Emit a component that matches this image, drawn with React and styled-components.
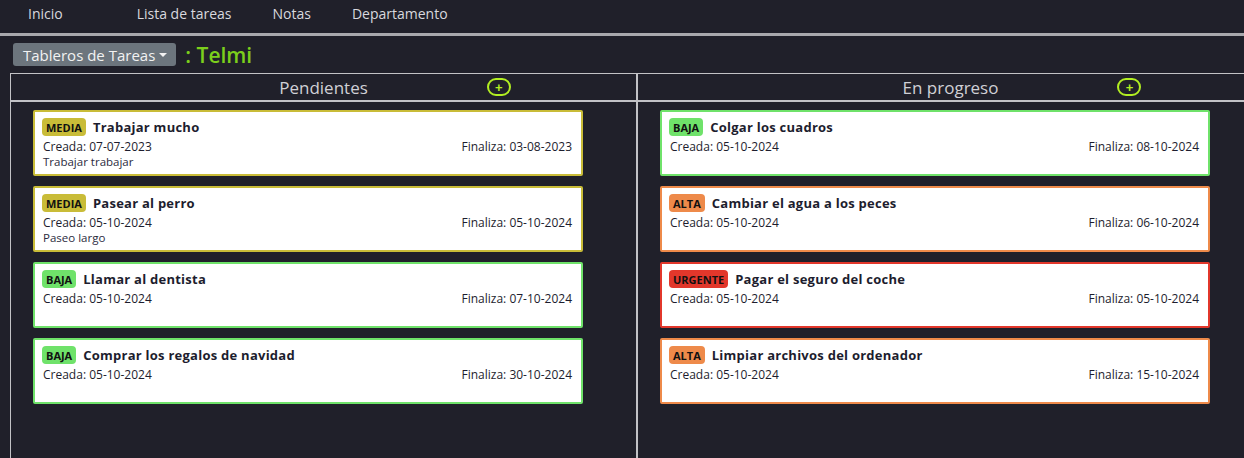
import React from "react"
import styled, { createGlobalStyle } from "styled-components"

const GlobalStyle = createGlobalStyle`
  html, body {
    margin: 0;
    padding: 0;
    background: #20202a;
    font-family: "Open Sans", "Noto Sans", sans-serif;
    overflow: hidden;
  }
`

const PRIORITY = {
  MEDIA: "#c9bc38",
  BAJA: "#6fe26a",
  ALTA: "#ee8a4a",
  URGENTE: "#e2372b",
}

const Page = styled.div`
  min-height: 458px;
  display: flex;
  flex-direction: column;
`

const Nav = styled.nav`
  height: 36px;
  box-sizing: border-box;
  display: flex;
  align-items: center;
  padding: 0 0 6px 28px;
  border-bottom: 3px solid #a8a8ad;
`

const NavLink = styled.a`
  color: #d8d8de;
  font-size: 14px;
  font-weight: 500;
  margin-right: ${(props) => props.$gap}px;
  text-decoration: none;
`

const Toolbar = styled.div`
  display: flex;
  align-items: center;
  gap: 9px;
  padding: 6px 13px 0;
  height: 31px;
  box-sizing: border-box;
`

const Dropdown = styled.button`
  height: 23px;
  padding: 0 9px 0 10px;
  background: #6c757d;
  border: none;
  border-radius: 3px;
  color: #f2f2f2;
  font-family: inherit;
  font-size: 15px;
  font-weight: 500;
  display: flex;
  align-items: center;
  gap: 4px;

  &::after {
    content: "";
    border-left: 4px solid transparent;
    border-right: 4px solid transparent;
    border-top: 4px solid #f2f2f2;
    margin-top: 1px;
  }
`

const Owner = styled.span`
  color: #7ccf1c;
  font-size: 21px;
  font-weight: 600;
`

const Board = styled.div`
  margin: 6px 0 0 10px;
  flex: 1;
  display: grid;
  grid-template-columns: 627px 627px;
  border-top: 1px solid #c2c2c6;
  border-left: 1px solid #c2c2c6;
`

const Column = styled.section`
  border-right: 2px solid #c2c2c6;
  display: flex;
  flex-direction: column;
  min-height: 384px;
`

const ColumnHeader = styled.div`
  height: 26px;
  display: grid;
  grid-template-columns: 1fr auto 1fr;
  align-items: center;
  border-bottom: 2px solid #c2c2c6;
`

const ColumnTitle = styled.h3`
  grid-column: 2;
  margin: 0;
  font-size: 17px;
  font-weight: 500;
  color: #d0d0d6;
`

const AddButton = styled.button`
  justify-self: start;
  margin-left: ${(props) => props.$offset}px;
  width: 24px;
  height: 18px;
  border: 2px solid #b2ee22;
  border-radius: 9px;
  background: transparent;
  color: #b2ee22;
  font-size: 13px;
  font-weight: 700;
  line-height: 1;
  padding: 0;
  display: flex;
  align-items: center;
  justify-content: center;
`

const CardList = styled.div`
  display: flex;
  flex-direction: column;
  gap: 10px;
  padding: 8px 0 0 22px;
`

const Card = styled.article`
  width: 550px;
  height: 66px;
  box-sizing: border-box;
  background: #ffffff;
  border: 2px solid ${(props) => props.$color};
  border-radius: 2px;
  padding: 5px 9px 0 7px;
  color: #1d1d2e;
`

const CardTop = styled.div`
  display: flex;
  align-items: center;
  gap: 7px;
  height: 20px;
`

const Badge = styled.span`
  background: ${(props) => props.$color};
  border-radius: 4px;
  padding: 0 4px;
  height: 18px;
  display: flex;
  align-items: center;
  font-size: 11px;
  font-weight: 700;
  color: #111;
`

const CardTitle = styled.h4`
  margin: 0;
  font-size: 13px;
  font-weight: 700;
  letter-spacing: 0.25px;
`

const Dates = styled.div`
  display: flex;
  justify-content: space-between;
  font-size: 12px;
  font-weight: 500;
  margin-top: 1px;
  padding-left: 1px;
`

const Description = styled.p`
  margin: -1px 0 0 1px;
  font-size: 11.5px;
  color: #2b2b3e;
`

const columns = [
  {
    title: "Pendientes",
    addOffset: 119,
    tasks: [
      { p: "MEDIA", t: "Trabajar mucho", c: "07-07-2023", f: "03-08-2023", d: "Trabajar trabajar" },
      { p: "MEDIA", t: "Pasear al perro", c: "05-10-2024", f: "05-10-2024", d: "Paseo largo" },
      { p: "BAJA", t: "Llamar al dentista", c: "05-10-2024", f: "07-10-2024" },
      { p: "BAJA", t: "Comprar los regalos de navidad", c: "05-10-2024", f: "30-10-2024" },
    ],
  },
  {
    title: "En progreso",
    addOffset: 119,
    tasks: [
      { p: "BAJA", t: "Colgar los cuadros", c: "05-10-2024", f: "08-10-2024" },
      { p: "ALTA", t: "Cambiar el agua a los peces", c: "05-10-2024", f: "06-10-2024" },
      { p: "URGENTE", t: "Pagar el seguro del coche", c: "05-10-2024", f: "05-10-2024" },
      { p: "ALTA", t: "Limpiar archivos del ordenador", c: "05-10-2024", f: "15-10-2024" },
    ],
  },
]

export default function App() {
  return (
    <Page>
      <GlobalStyle />
      <Nav>
        <NavLink $gap={74}>Inicio</NavLink>
        <NavLink $gap={41}>Lista de tareas</NavLink>
        <NavLink $gap={41}>Notas</NavLink>
        <NavLink $gap={0}>Departamento</NavLink>
      </Nav>
      <Toolbar>
        <Dropdown>Tableros de Tareas</Dropdown>
        <Owner>: Telmi</Owner>
      </Toolbar>
      <Board>
        {columns.map((col) => (
          <Column key={col.title}>
            <ColumnHeader>
              <ColumnTitle>{col.title}</ColumnTitle>
              <AddButton $offset={col.addOffset}>+</AddButton>
            </ColumnHeader>
            <CardList>
              {col.tasks.map((task) => (
                <Card key={task.t} $color={PRIORITY[task.p]}>
                  <CardTop>
                    <Badge $color={PRIORITY[task.p]}>{task.p}</Badge>
                    <CardTitle>{task.t}</CardTitle>
                  </CardTop>
                  <Dates>
                    <span>Creada: {task.c}</span>
                    <span>Finaliza: {task.f}</span>
                  </Dates>
                  {task.d && <Description>{task.d}</Description>}
                </Card>
              ))}
            </CardList>
          </Column>
        ))}
      </Board>
    </Page>
  )
}
